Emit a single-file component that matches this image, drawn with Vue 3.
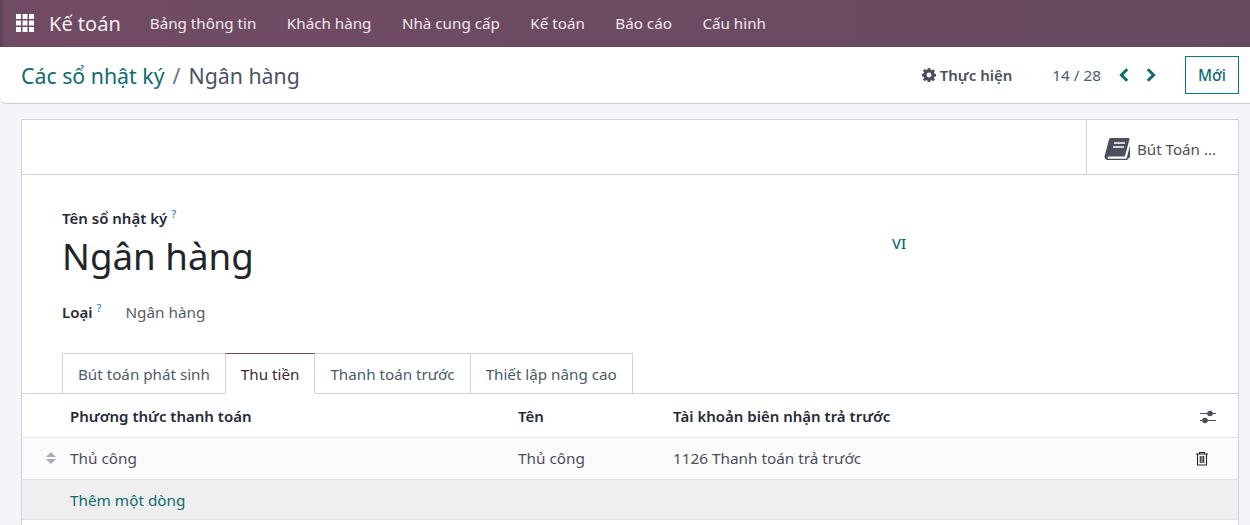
<template>
  <div class="page">
    <header class="navbar">
      <svg class="apps" viewBox="0 0 18 18" width="18" height="18">
        <rect v-for="c in appCells" :key="c.k" :x="c.x" :y="c.y" width="5" height="5" fill="#fff" />
      </svg>
      <span class="brand">Kế toán</span>
      <nav class="menu">
        <a v-for="m in menus" :key="m">{{ m }}</a>
      </nav>
    </header>

    <div class="control">
      <div class="crumbs">
        <a>Các sổ nhật ký</a>
        <span class="sep">/</span>
        <span class="current">Ngân hàng</span>
      </div>
      <div class="actions">
        <span class="action">
          <svg viewBox="0 0 16 16" width="14" height="14">
            <path fill="#4b4f5c" fill-rule="evenodd" d="M6.600 0h2.800l.4 2.100 1.200.5 1.800-1.200 2 2-1.200 1.800.5 1.200 2.100.4v2.800l-2.100.4-.5 1.200 1.200 1.800-2 2-1.800-1.200-1.200.5-.4 2.100H6.600l-.4-2.100-1.200-.5-1.800 1.200-2-2 1.200-1.800-.5-1.200L-.2 9.400V6.600l2.100-.4.5-1.200-1.200-1.800 2-2 1.800 1.200 1.200-.5zM8 5.200a2.800 2.800 0 1 0 0 5.600 2.800 2.800 0 0 0 0-5.600z" />
          </svg>
          Thực hiện
        </span>
        <span class="pager">14 / 28</span>
        <svg class="chev" viewBox="0 0 10 14" width="10" height="14"><path d="M8.200 1.200 2.400 7l5.800 5.800" /></svg>
        <svg class="chev next" viewBox="0 0 10 14" width="10" height="14"><path d="M1.800 1.200 7.600 7l-5.800 5.800" /></svg>
        <button class="new">Mới</button>
      </div>
    </div>

    <main class="content">
      <section class="sheet">
        <div class="button-box">
          <div class="stat">
            <svg viewBox="0 0 26 24" width="26" height="24">
              <path fill="#4b4f5c" d="M7 1h17.500c.8 0 1.200.6 1 1.300l-4.300 16c-.2.8-.8 1.200-1.500 1.200H5c-1.200 0-1.600.8-1.500 1.300.1.500.6 1 1.500 1h16.500c.6 0 1-.4 1.200-.9L26 8.500v11.500l-2.500 2.500c-.4.500-1 .5-1.500.5H4c-2 0-3.700-1.500-3.500-3.700.1-.7.300-1.300.6-2L5 2.500C5.300 1.600 6 1 7 1z" />
              <path stroke="#fff" stroke-width="1.500" d="M10 6h11M9 10h11" />
            </svg>
            <span>Bút Toán ...</span>
          </div>
        </div>

        <div class="form-body">
          <div class="title-row">
            <div class="title-col">
              <label class="lbl">Tên sổ nhật ký<sup>?</sup></label>
              <h1>Ngân hàng</h1>
            </div>
            <span class="lang">VI</span>
          </div>
          <div class="type-row">
            <label class="lbl">Loại<sup>?</sup></label>
            <span class="val">Ngân hàng</span>
          </div>
        </div>

        <ul class="tabs">
          <li v-for="t in tabs" :key="t" :class="{ active: t === activeTab }">{{ t }}</li>
        </ul>

        <div class="table">
          <div class="row head">
            <span class="c-name">Phương thức thanh toán</span>
            <span class="c-label">Tên</span>
            <span class="c-acc">Tài khoản biên nhận trả trước</span>
            <svg class="c-end opts" viewBox="0 0 18 14" width="18" height="14">
              <path d="M1 3.500h16M1 10.500h16" stroke="#4b4f5c" stroke-width="1" />
              <circle cx="11" cy="3.500" r="2.800" fill="#4b4f5c" />
              <circle cx="6" cy="10.500" r="2.800" fill="#4b4f5c" />
            </svg>
          </div>
          <div class="row item">
            <svg class="handle" viewBox="0 0 12 14" width="12" height="14">
              <path d="M6 1l5 5H1zM6 13l5-5H1z" fill="#a9adb5" />
            </svg>
            <span class="c-name">Thủ công</span>
            <span class="c-label">Thủ công</span>
            <span class="c-acc">1126 Thanh toán trả trước</span>
            <svg class="c-end" viewBox="0 0 14 15" width="14" height="15">
              <path d="M1 3h12M4.500 3V1.500h5V3M2.500 3v11h9V3M5.300 5v7M7 5v7M8.700 5v7" fill="none" stroke="#23262e" stroke-width="1.100" />
            </svg>
          </div>
          <div class="row add"><a>Thêm một dòng</a></div>
        </div>
      </section>
    </main>
  </div>
</template>

<script setup>
const menus = ['Bảng thông tin', 'Khách hàng', 'Nhà cung cấp', 'Kế toán', 'Báo cáo', 'Cấu hình']
const tabs = ['Bút toán phát sinh', 'Thu tiền', 'Thanh toán trước', 'Thiết lập nâng cao']
const activeTab = 'Thu tiền'

const appCells = []
for (let r = 0; r < 3; r++) {
  for (let c = 0; c < 3; c++) {
    appCells.push({ k: r + '-' + c, x: c * 6.5, y: r * 6.5 })
  }
}
</script>

<style>
html, body {
  margin: 0;
  background: #f4f5f9;
}
</style>

<style scoped>
.page {
  width: 1250px;
  height: 525px;
  overflow: hidden;
  font-family: "Noto Sans", "Open Sans", sans-serif;
  font-size: 15.300px;
  color: #4b4f5c;
  background: #f4f5f9;
}

.navbar {
  display: flex;
  align-items: center;
  height: 47px;
  padding-left: 13px;
  padding-bottom: 1px;
  color: #fff;
  background: linear-gradient(90deg, #714b63, #664b60);
  border-left: 3px solid #5f4356;
  box-sizing: border-box;
}

.apps {
  flex: none;
}

.brand {
  margin-left: 15px;
  font-size: 20px;
  color: #f3eef1;
}

.menu {
  display: flex;
  gap: 30.500px;
  margin-left: 29px;
  font-size: 15.200px;
  color: #efe9ed;
}

.control {
  display: flex;
  align-items: center;
  justify-content: space-between;
  height: 57px;
  box-sizing: border-box;
  padding: 0 11px 0 21px;
  background: #fff;
  border-bottom: 1px solid #cfd1d8;
  border-radius: 0 0 0 6px;
}

.crumbs {
  display: flex;
  gap: 8px;
  font-size: 21.300px;
}

.crumbs a {
  color: #0f6b70;
}

.sep {
  color: #6c7280;
}

.current {
  color: #4b5260;
}

.actions {
  display: flex;
  align-items: center;
}

.action {
  display: flex;
  align-items: center;
  gap: 4px;
  font-size: 15px;
  font-weight: 600;
  color: #4b4f5c;
}

.pager {
  margin-left: 40px;
  margin-right: 18px;
  color: #4b5a68;
}

.chev {
  fill: none;
  stroke: #0f6b70;
  stroke-width: 3;
}

.chev.next {
  margin-left: 17px;
}

.new {
  margin-left: 29px;
  width: 54px;
  height: 38px;
  padding: 0;
  font: inherit;
  font-weight: 500;
  color: #0f6b70;
  background: #fff;
  border: 1px solid #017e84;
}

.content {
  padding: 15px 11px 0 21px;
}

.sheet {
  height: 440px;
  box-sizing: border-box;
  background: #fff;
  border: 1px solid #cfd1d8;
}

.button-box {
  display: flex;
  justify-content: flex-end;
  height: 55px;
  box-sizing: border-box;
  border-bottom: 1px solid #cfd1d8;
}

.stat {
  display: flex;
  align-items: center;
  gap: 7px;
  width: 152px;
  box-sizing: border-box;
  padding: 3px 0 0 17px;
  font-size: 15.150px;
  border-left: 1px solid #cfd1d8;
}

.form-body {
  padding: 31px 40px 0;
}

.title-row {
  display: flex;
}

.title-col {
  width: 830px;
}

.lbl {
  font-size: 15px;
  font-weight: 600;
  color: #262a36;
}

.lbl sup {
  margin-left: 4px;
  font-size: 11px;
  font-weight: 500;
  color: #2f86ad;
}

h1 {
  margin: 2px 0 0;
  font-size: 36.700px;
  font-weight: 400;
  line-height: 52px;
  color: #212529;
}

.lang {
  margin-top: 27px;
  font-size: 14.500px;
  font-weight: 500;
  color: #0f6b70;
}

.type-row {
  display: flex;
  align-items: baseline;
  gap: 24px;
  margin-top: 18px;
}

.val {
  color: #555b68;
}

.tabs {
  display: flex;
  margin: 31px 0 0;
  padding: 0 0 0 40px;
  font-size: 15.200px;
  list-style: none;
  border-bottom: 1px solid #cfd1d8;
}

.tabs li {
  height: 39px;
  margin-right: -1px;
  margin-bottom: -1px;
  padding: 0 15px;
  line-height: 41px;
  color: #4b5a68;
  background: #fff;
  border: 1px solid #cfd1d8;
}

.tabs li.active {
  z-index: 1;
  color: #3b2a34;
  border-top-color: #71495f;
  border-bottom-color: #fff;
}

.row {
  position: relative;
  display: flex;
  align-items: center;
  padding-left: 48px;
  box-sizing: border-box;
  border-bottom: 1px solid #e2e3e7;
}

.head {
  height: 44px;
  padding-top: 1px;
  font-size: 15px;
  font-weight: 600;
  color: #262a36;
  background: #fff;
}

.item {
  height: 42px;
  padding-bottom: 1px;
  background: #fbfbfb;
}

.add {
  height: 40px;
  padding-top: 1px;
  color: #0f6b70;
  background: #efefef;
}

.handle {
  position: absolute;
  left: 23px;
  top: 13px;
}

.c-name {
  width: 448px;
}

.c-label {
  width: 155px;
}

.c-acc {
  width: 522px;
}

.c-end {
  flex: none;
}

.opts {
  margin-left: 4px;
  margin-top: 2px;
}
</style>
